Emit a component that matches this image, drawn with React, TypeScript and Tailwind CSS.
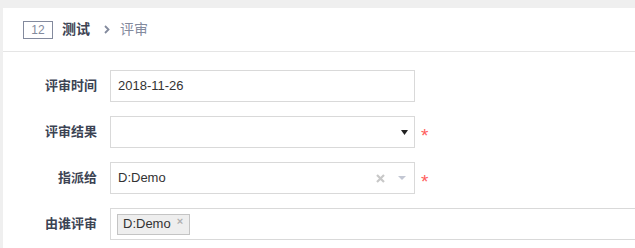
const cjk = "font-['Liberation_Sans','Noto_Sans_CJK_SC',sans-serif]";

function Star() {
  return <span className="ml-[6px] text-[19px] leading-none text-[#ff5d5d] pt-[7px]">*</span>;
}

function Row({ label, children }: { label: string; children: React.ReactNode }) {
  return (
    <div className="flex items-center h-[32px]">
      <div className="w-[94px] shrink-0 text-right text-[13px] font-bold text-[#3c4353]">{label}</div>
      <div className="ml-[13px] flex items-center">{children}</div>
    </div>
  );
}

export default function App() {
  return (
    <div className={`w-[635px] h-[248px] overflow-hidden bg-[#efefef] pt-[8px] pl-[3px] ${cjk}`}>
      <div className="w-[700px] h-[240px] bg-white">
        {/* Header */}
        <div className="h-[44px] border-b border-[#e5e5e5] flex items-center pl-[20px]">
          <span className="w-[30px] h-[18px] border border-[#838a9d] flex items-center justify-center text-[12px] text-[#838a9d] leading-none">
            12
          </span>
          <span className="ml-[9px] text-[14px] font-bold text-[#3c4353]">测试</span>
          <svg className="ml-[14px]" width="6" height="9" viewBox="0 0 6 9">
            <path d="M1 1 L4.5 4.5 L1 8" fill="none" stroke="#838a9d" strokeWidth="1.8" />
          </svg>
          <span className="ml-[10px] text-[14px] text-[#838a9d]">评审</span>
        </div>

        {/* Form */}
        <div className="pt-[18px] flex flex-col gap-[14px]">
          <Row label="评审时间">
            <div className="w-[305px] h-[32px] border border-[#d9d9d9] flex items-center px-[7px] text-[13px] text-[#333]">
              2018-11-26
            </div>
          </Row>
          <Row label="评审结果">
            <div className="w-[305px] h-[32px] border border-[#d9d9d9] flex items-center justify-end pr-[6px]">
              <svg width="7" height="5" viewBox="0 0 7 5">
                <path d="M0 0 H7 L3.5 5 Z" fill="#222" />
              </svg>
            </div>
            <Star />
          </Row>
          <Row label="指派给">
            <div className="w-[305px] h-[32px] border border-[#d9d9d9] flex items-center px-[7px] text-[13px] text-[#333]">
              <span className="flex-1">D:Demo</span>
              <svg width="9" height="9" viewBox="0 0 9 9">
                <path d="M1 1 L8 8 M8 1 L1 8" stroke="#c8c8c8" strokeWidth="2.2" />
              </svg>
              <svg className="ml-[13px] mr-[1px]" width="8" height="4" viewBox="0 0 8 4">
                <path d="M0 0 H8 L4 4 Z" fill="#c3c7d3" />
              </svg>
            </div>
            <Star />
          </Row>
          <Row label="由谁评审">
            <div className="w-[560px] h-[32px] border border-[#d9d9d9] flex items-center pl-[6px]">
              <span className="h-[21px] flex items-center bg-[#eeeeee] border border-[#c4c4c4] pl-[5px] pr-[6px] text-[13px] text-[#333]">
                D:Demo
                <span className="ml-[6px] -mt-[5px] text-[11px] font-bold leading-none text-[#b0b0b0]">×</span>
              </span>
            </div>
          </Row>
        </div>
      </div>
    </div>
  );
}
